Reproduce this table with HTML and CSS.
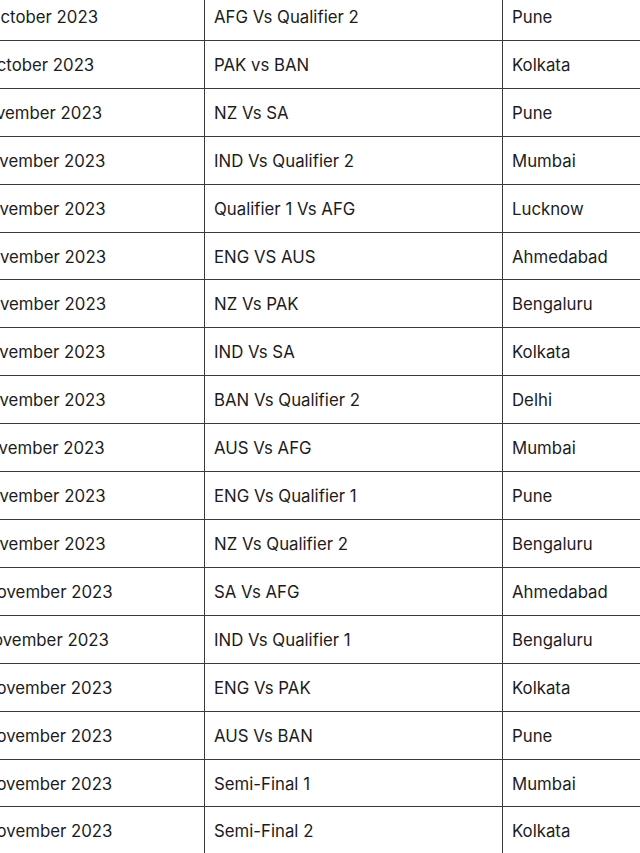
FILE: index.html
```html
<!DOCTYPE html>
<html lang="en">
<head>
<meta charset="utf-8">
<title>World Cup 2023 Schedule</title>
<link rel="stylesheet" href="styles.css">
</head>
<body>
<div class="viewport">
  <table class="schedule">
    <colgroup>
      <col class="col-date">
      <col class="col-match">
      <col class="col-venue">
    </colgroup>
    <tbody>
      <tr><td>30 October 2023</td><td>AFG Vs Qualifier 2</td><td>Pune</td></tr>
      <tr><td>31 October 2023</td><td>PAK vs BAN</td><td>Kolkata</td></tr>
      <tr><td>1 November 2023</td><td>NZ Vs SA</td><td>Pune</td></tr>
      <tr><td>2 November 2023</td><td>IND Vs Qualifier 2</td><td>Mumbai</td></tr>
      <tr><td>3 November 2023</td><td>Qualifier 1 Vs AFG</td><td>Lucknow</td></tr>
      <tr><td>4 November 2023</td><td>ENG VS AUS</td><td>Ahmedabad</td></tr>
      <tr><td>4 November 2023</td><td>NZ Vs PAK</td><td>Bengaluru</td></tr>
      <tr><td>5 November 2023</td><td>IND Vs SA</td><td>Kolkata</td></tr>
      <tr><td>6 November 2023</td><td>BAN Vs Qualifier 2</td><td>Delhi</td></tr>
      <tr><td>7 November 2023</td><td>AUS Vs AFG</td><td>Mumbai</td></tr>
      <tr><td>8 November 2023</td><td>ENG Vs Qualifier 1</td><td>Pune</td></tr>
      <tr><td>9 November 2023</td><td>NZ Vs Qualifier 2</td><td>Bengaluru</td></tr>
      <tr><td>10 November 2023</td><td>SA Vs AFG</td><td>Ahmedabad</td></tr>
      <tr><td>11 November 2023</td><td>IND Vs Qualifier 1</td><td>Bengaluru</td></tr>
      <tr><td>12 November 2023</td><td>ENG Vs PAK</td><td>Kolkata</td></tr>
      <tr><td>12 November 2023</td><td>AUS Vs BAN</td><td>Pune</td></tr>
      <tr><td>15 November 2023</td><td>Semi-Final 1</td><td>Mumbai</td></tr>
      <tr><td>16 November 2023</td><td>Semi-Final 2</td><td>Kolkata</td></tr>
    </tbody>
  </table>
</div>
</body>
</html>
```

FILE: styles.css
```css
html, body {
  margin: 0;
  padding: 0;
  background: #ffffff;
}

.viewport {
  width: 640px;
  height: 853px;
  overflow: hidden;
}

.schedule {
  border-collapse: collapse;
  table-layout: fixed;
  width: 754px;
  margin-top: -8px;
  margin-left: -48px;
  font-family: Inter, "Noto Sans", sans-serif;
  font-size: 16.8px;
  color: #1c1c1c;
}

.col-date { width: 252px; }
.col-match { width: 298px; }
.col-venue { width: 204px; }

.schedule td {
  border: 1px solid #3a3a3a;
  padding: 11px 9px 9px;
  line-height: 26.9px;
  white-space: nowrap;
  overflow: hidden;
  text-align: left;
  vertical-align: middle;
}
```
